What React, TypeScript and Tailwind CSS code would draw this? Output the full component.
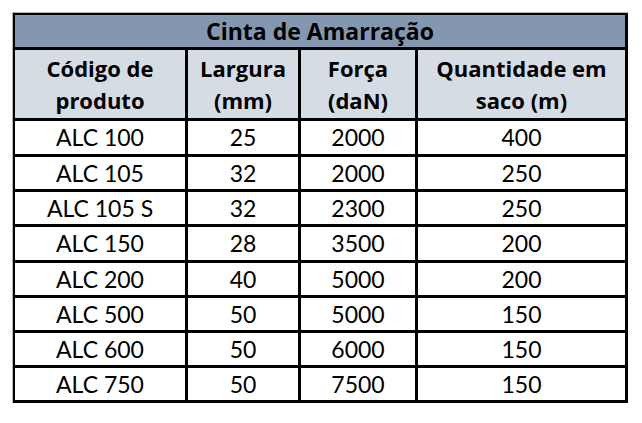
import React from "react";

const rows: [string, string, string, string][] = [
  ["ALC 100", "25", "2000", "400"],
  ["ALC 105", "32", "2000", "250"],
  ["ALC 105 S", "32", "2300", "250"],
  ["ALC 150", "28", "3500", "200"],
  ["ALC 200", "40", "5000", "200"],
  ["ALC 500", "50", "5000", "150"],
  ["ALC 600", "50", "6000", "150"],
  ["ALC 750", "50", "7500", "150"],
];

const headers: [string, string][] = [
  ["Código de", "produto"],
  ["Largura", "(mm)"],
  ["Força", "(daN)"],
  ["Quantidade em", "saco (m)"],
];
const rowHeights = ["h-[33px]", "h-[32px]", "h-[32px]", "h-[33px]", "h-[32px]", "h-[32px]", "h-[32px]", "h-[32px]"];

const App: React.FC = () => {
  return (
    <div className="min-h-[423px] w-[642px] bg-white pl-[12px] pt-[12px] font-['Lato',sans-serif] text-black">
      <div className="w-[616px] border-t border-l border-[#b8b8b8]">
        <div className="grid grid-cols-[170px_110px_114px_207px] gap-[3px] bg-black p-[3px] pl-[2px] pt-[2px]">
          <div className="col-span-4 flex h-[32px] items-center justify-center bg-[#8497b0] font-['Open_Sans',sans-serif] text-[23px] font-bold">
            Cinta de Amarração
          </div>
          {headers.map(([a, b]) => (
            <div
              key={a}
              className="flex h-[68px] flex-col items-center justify-center bg-[#d6dce4] font-['Open_Sans',sans-serif] text-[22px] font-bold leading-[32px]"
            >
              <span>{a}</span>
              <span>{b}</span>
            </div>
          ))}
          {rows.map((r, i) =>
            r.map((c, j) => (
              <div
                key={`${i}-${j}`}
                className={`flex ${rowHeights[i]} items-center justify-center bg-white text-[23px]`}
              >
                {c}
              </div>
            ))
          )}
        </div>
      </div>
    </div>
  );
};

export default App;
